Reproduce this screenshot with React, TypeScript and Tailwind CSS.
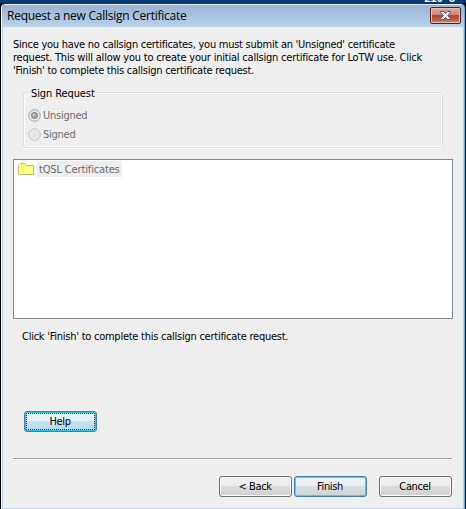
import { useState } from "react";
import type { ReactNode } from "react";

// ---------------------------------------------------------------------------
// Buttons
// ---------------------------------------------------------------------------
type ButtonVariant = "normal" | "default" | "focused";

const BUTTON_STYLE: Record<ButtonVariant, string> = {
  normal:
    "border-[#707070] shadow-[inset_0_0_0_1px_#fbfbfb] bg-[linear-gradient(#f2f2f2_0%,#ebebeb_49%,#dddddd_50%,#cfcfcf_100%)]",
  default:
    "border-[#3c7fb1] shadow-[inset_0_0_0_1px_#48d0f5] bg-[linear-gradient(#f0f3f4_0%,#e9edef_49%,#dadfe1_50%,#ced3d6_100%)]",
  focused:
    "border-[#3c7fb1] shadow-[inset_0_0_0_1px_#22c8f4] bg-[linear-gradient(#edf6fb_0%,#e2f0f8_49%,#c9e3f1_50%,#b5d6e8_100%)]",
};

function PushButton({
  variant = "normal",
  children,
}: {
  variant?: ButtonVariant;
  children: ReactNode;
}) {
  return (
    <button
      type="button"
      className={`h-[21px] w-[73px] rounded-[3px] border p-px text-center leading-[17px] outline-none ${BUTTON_STYLE[variant]}`}
    >
      <span
        className={
          variant === "focused"
            ? "block h-[17px] border border-dotted border-[#4a1408] pr-px leading-[16px]"
            : "block h-[17px] pr-px leading-[18px]"
        }
      >
        {children}
      </span>
    </button>
  );
}

function CloseButton() {
  return (
    <button
      type="button"
      aria-label="Close"
      className="flex h-[17px] w-[31px] items-center justify-center rounded-[2px] border border-[#53202a] bg-[linear-gradient(#e0a99f_0%,#cf8375_45%,#b84532_50%,#c05a43_78%,#d98f78_100%)] shadow-[inset_0_0_0_1px_#e9b9ad]"
    >
      <svg width="11" height="9" viewBox="0 0 11 9" aria-hidden>
        <path
          d="M.5.5h3l2 1.9 2-1.9h3v1L7.8 4.5l2.7 3v1h-3l-2-1.9-2 1.9h-3v-1l2.7-3-2.7-3z"
          fill="#f5f5f5"
          stroke="#545566"
          strokeWidth="1"
        />
      </svg>
    </button>
  );
}

// ---------------------------------------------------------------------------
// Sign request choice
// ---------------------------------------------------------------------------
function RadioOption({ label, checked }: { label: string; checked: boolean }) {
  return (
    <label className="flex h-[19px] items-center gap-[2px] text-[#6d6d6d]">
      <input type="radio" name="sign" className="sr-only" checked={checked} disabled readOnly />
      <svg width="13" height="13" viewBox="0 0 13 13" aria-hidden>
        <circle
          cx="6.5"
          cy="6.5"
          r="5.7"
          fill="#f1f1f1"
          stroke={checked ? "#a0a0a0" : "#bcbcbc"}
        />
        <circle cx="6.5" cy="6.5" r="4" fill={checked ? "#e0e0e0" : "#e6e6e6"} />
        {checked && (
          <>
            <circle cx="6.5" cy="6.5" r="3.1" fill="#a2a2a2" stroke="#808080" strokeWidth=".9" />
            <circle cx="5.8" cy="5.8" r="1.2" fill="#c6c6c6" />
          </>
        )}
      </svg>
      <span className="tracking-[-0.25px]">{label}</span>
    </label>
  );
}

function FolderIcon() {
  return (
    <svg width="16" height="12" viewBox="0 0 16 12" aria-hidden>
      <path d="M.5 11.5v-9l2-2h4l2 2h7v9z" fill="#ffff80" stroke="#c3bd72" />
    </svg>
  );
}

// ---------------------------------------------------------------------------
// Dialog
// ---------------------------------------------------------------------------
export default function App() {
  const [signed] = useState(false);

  return (
    <div className="flex h-[509px] w-[466px] flex-col overflow-hidden bg-black font-['DejaVu_Sans_Condensed','DejaVu_Sans',sans-serif] text-[11px] leading-[13px] tracking-[-0.37px] text-black [font-stretch:condensed]">
      <div className="flex h-[3px] shrink-0 justify-end overflow-hidden bg-[#0b3a78] pr-[11px] font-['Liberation_Sans',sans-serif] font-bold text-white">
        <span className="-mt-[8px] tracking-normal">210_5</span>
      </div>

      <div className="ml-px mr-px flex flex-1 flex-col overflow-hidden rounded-t-[5px] border-l border-r border-t border-l-[#f4f8fc] border-r-[#43b9df] border-t-[#27303b] bg-[#b8d1ee]">
        <header className="flex h-[23px] shrink-0 items-start justify-between border-t border-[#e4edf6] bg-[linear-gradient(#99b4d1,#b9d1ea)] pl-[5px] pr-[3px] pt-[2px]">
          <h1 className="whitespace-nowrap font-['Open_Sans',sans-serif] text-[12px] leading-[18px] tracking-[-0.25px] [font-stretch:normal]">
            Request a new Callsign Certificate
          </h1>
          <CloseButton />
        </header>

        <main className="mb-px ml-px mr-px flex flex-1 flex-col bg-[#efefef] pl-[10px] pr-[11px] pt-[11px]">
          <p className="whitespace-nowrap tracking-[-0.25px]">
            <span className="tracking-[-0.26px]">
              Since you have no callsign certificates, you must submit an 'Unsigned' certificate
            </span>
            <br />
            <span className="tracking-[-0.21px]">
              request. This will allow you to create your initial callsign certificate for LoTW use. Click
            </span>
            <br />
            'Finish' to complete this callsign certificate request.
          </p>

          <section className="ml-[10px] mt-[15px] h-[56px] w-[420px] rounded-[3px] border border-[#d5dfe5] shadow-[inset_0_0_0_1px_#fff,0_1px_0_#fff]">
            <h2 className="-mt-[6px] ml-[5px] w-[67px] whitespace-nowrap bg-[#efefef] pl-[2px] tracking-[-0.1px]">
              Sign Request
            </h2>
            <div className="ml-[4px] mt-[6px]">
              <RadioOption label="Unsigned" checked={!signed} />
              <RadioOption label="Signed" checked={signed} />
            </div>
          </section>

          <div className="mt-[11px] h-[160px] w-[440px] border border-[#828790] bg-white pl-[4px] pt-px">
            <div className="flex h-[16px] items-center gap-[3px] text-[#6d6d6d]">
              <FolderIcon />
              <span className="h-[16px] w-[85px] whitespace-nowrap bg-[#efefef] px-[2px] leading-[17px] tracking-[-0.15px]">
                tQSL Certificates
              </span>
            </div>
          </div>

          <p className="ml-[9px] mt-[11px] whitespace-nowrap tracking-[-0.25px]">
            Click 'Finish' to complete this callsign certificate request.
          </p>

          <div className="ml-[11px] mt-[68px] h-[21px]">
            <PushButton variant="focused">Help</PushButton>
          </div>

          <hr className="mt-[26px] h-[2px] border-b border-t border-b-white border-t-[#a0a0a0]" />

          <footer className="mt-[16px] flex justify-end">
            <PushButton>&lt; Back</PushButton>
            <div className="ml-[2px] mr-[12px] flex">
              <PushButton variant="default">Finish</PushButton>
            </div>
            <PushButton>Cancel</PushButton>
          </footer>
        </main>
      </div>
    </div>
  );
}
